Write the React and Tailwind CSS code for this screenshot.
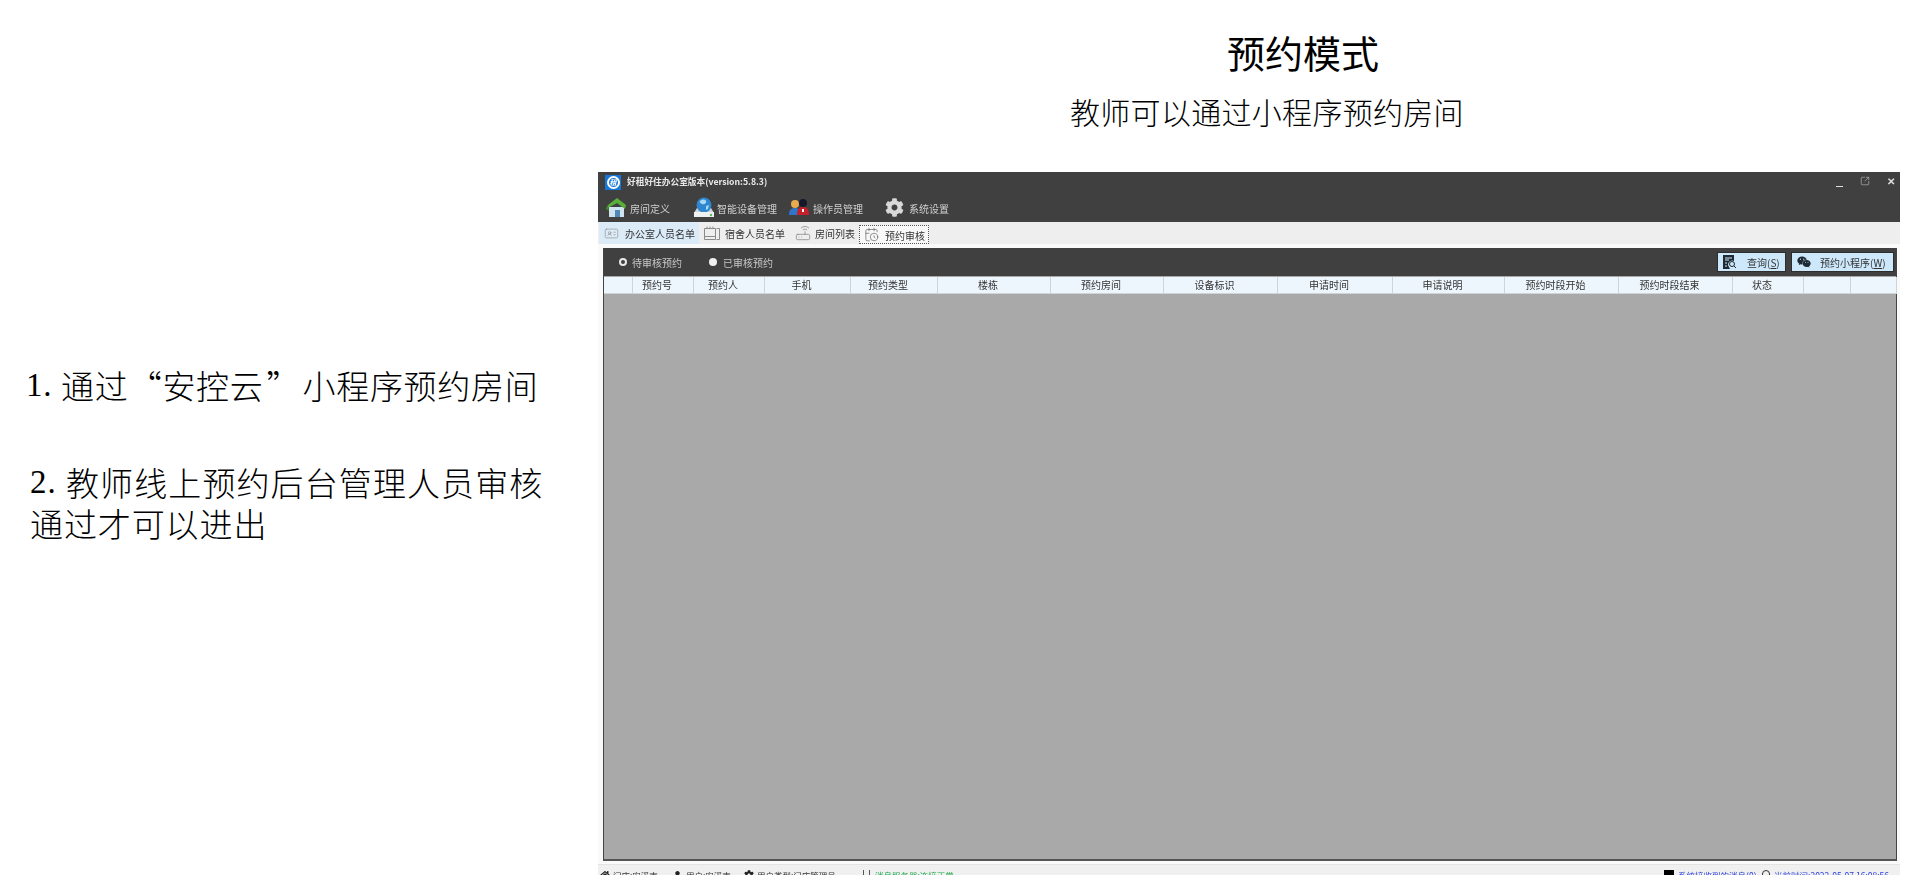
import { CalendarClock, IdCard, Router, SquareArrowOutUpRight } from 'lucide-react';
import { FaCog, FaHome, FaUser, FaWeixin } from 'react-icons/fa';

const COLUMNS = [
  '',
  '预约号',
  '预约人',
  '手机',
  '预约类型',
  '楼栋',
  '预约房间',
  '设备标识',
  '申请时间',
  '申请说明',
  '预约时段开始',
  '预约时段结束',
  '状态',
  '',
  '',
];

function AppLogo() {
  return (
    <div className="flex h-[15px] w-[16px] items-center justify-center bg-[#1677d8]">
      <div className="flex h-[13px] w-[13px] items-center justify-center rounded-full border-2 border-white text-[7px] font-bold italic leading-none text-white">
        租
      </div>
    </div>
  );
}

function HouseIcon() {
  return (
    <svg width="22" height="21" viewBox="0 0 22 21" aria-hidden>
      <path d="M4 10h15v10H4z" fill="#cfe3ef" />
      <path d="M10 13h5v7h-5z" fill="#4f87b5" />
      <path d="M1 12 3 8l9-7 9 7-1 4-8-6z" fill="#58b038" />
      <path d="M1 12 3 8l1 6z" fill="#3d8a2a" />
    </svg>
  );
}

function DriveIcon() {
  return (
    <svg width="20" height="21" viewBox="0 0 20 21" aria-hidden>
      <path d="M3 11 0 16v4h20v-4l-3-5z" fill="#cfd3d6" />
      <circle cx="10" cy="8" r="7.5" fill="#2d86cf" />
      <path d="M6 4c2-2 5-2 6 0s-2 4-4 3-3-2-2-3zM12 9l3-1-1 4-2 1z" fill="#a8d8f2" />
      <rect x="0" y="15" width="20" height="5" fill="#eef0f1" />
      <circle cx="17" cy="18" r="1.2" fill="#5cb85c" />
    </svg>
  );
}

function PeopleIcon() {
  return (
    <svg width="20" height="18" viewBox="0 0 20 18" aria-hidden>
      <circle cx="6" cy="6" r="4" fill="#e9a94e" />
      <path d="M0 17c0-5 2-7 6-7s6 2 6 7z" fill="#2f74c8" />
      <circle cx="14" cy="5" r="4" fill="#15182b" />
      <path d="M8 17c0-6 2-8 6-8s6 2 6 8z" fill="#c5202c" />
      <rect x="13" y="11" width="2" height="3" fill="#fff" />
    </svg>
  );
}

function BoardIcon() {
  return (
    <svg width="16" height="15" viewBox="0 0 16 15" fill="none" stroke="#8b8b8b" aria-hidden>
      <path d="M.5 2.5h11v11H.5zM12.5 2.5h3v11h-3M3 .5v2M6 .5v2M9 .5v2M.5 10.5h11" />
    </svg>
  );
}

function QueryIcon() {
  return (
    <svg width="13" height="14" viewBox="0 0 13 14" aria-hidden>
      <path d="M0 0h11v6a4 4 0 0 0-5 6l1 2H0z" fill="#1d2a33" />
      <path d="M2 3h7M2 5h4M2 8h2M2 11h2" stroke="#cfe8fb" />
      <circle cx="9" cy="9" r="2.5" fill="none" stroke="#1d2a33" />
      <path d="m11 11 2 2" stroke="#1d2a33" />
    </svg>
  );
}

function MenuItem({ icon, label, className }) {
  return (
    <div className={`flex items-center ${className}`}>
      {icon}
      <span className="pt-[2px] text-[10px] text-[#d0d0d0]">{label}</span>
    </div>
  );
}

function TabItem({ icon, label, className }) {
  return (
    <div className={`flex shrink-0 items-center whitespace-nowrap ${className}`}>
      {icon}
      <span className="pt-[1px] text-[10px] text-[#333]">{label}</span>
    </div>
  );
}

function ToolButton({ icon, children, className }) {
  return (
    <button
      type="button"
      className={`flex h-[20px] items-center border border-[#2d2d2d] bg-[#cde8fb] text-[10px] text-[#333] ${className}`}
    >
      {icon}
      {children}
    </button>
  );
}

export default function App() {
  return (
    <div className="flex h-[887px] overflow-hidden bg-white font-['Noto_Sans_CJK_SC',sans-serif] text-black">
      <aside className="w-[598px] shrink-0 pl-[26px] pt-[365px] text-[33px] font-light leading-[41px]">
        <p className="mb-[56px] flex whitespace-nowrap tracking-[0.7px]">
          <span className="w-[35px] font-['Liberation_Serif',serif]">1.</span>
          <span>通过</span>
          <span className="w-[34px] shrink-0 text-right">“</span>
          <span>安控云</span>
          <span className="w-[39px] shrink-0 pl-[3px]">”</span>
          <span>小程序预约房间</span>
        </p>
        <div className="pl-[4px]">
          <p className="flex whitespace-nowrap tracking-[1.1px]">
            <span className="w-[36px] font-['Liberation_Serif',serif]">2.</span>
            <span>教师线上预约后台管理人员审核</span>
          </p>
          <p className="whitespace-nowrap tracking-[0.9px]">通过才可以进出</p>
        </div>
      </aside>

      <main className="flex min-w-0 flex-1 flex-col pr-[20px] pt-[30px]">
        <h1 className="pl-[629px] text-[38px] font-normal leading-[44px]">预约模式</h1>
        <p className="mt-[17px] pl-[472px] text-[30px] font-light leading-[40px] tracking-[0.3px]">
          教师可以通过小程序预约房间
        </p>

        <section className="mt-[41px] flex h-[703px] flex-col overflow-hidden bg-[#fafafa] blur-[0.35px]">
          <header className="h-[50px] shrink-0 bg-[#404040]">
            <div className="flex h-[20px] items-center pl-[7px]">
              <AppLogo />
              <span className="ml-[6px] text-[8.7px] font-bold text-[#e8e8e8]">
                好租好住办公室版本(version:5.8.3)
              </span>
              <div className="ml-auto flex items-center gap-[17px] pr-[5px] text-[#e0e0e0]">
                <div className="mt-[8px] h-[1px] w-[7px] bg-[#e0e0e0]" />
                <SquareArrowOutUpRight className="mb-[3px] h-[10px] w-[10px] text-[#bbb]" strokeWidth={1.5} />
                <span className="mb-[3px] text-[10px] font-bold leading-none">✕</span>
              </div>
            </div>
            <div className="flex h-[30px] items-center pl-[7px]">
              <MenuItem icon={<HouseIcon />} label="房间定义" className="w-[89px] gap-[3px]" />
              <MenuItem icon={<DriveIcon />} label="智能设备管理" className="w-[95px] gap-[3px]" />
              <MenuItem icon={<PeopleIcon />} label="操作员管理" className="w-[96px] gap-[4px]" />
              <MenuItem
                icon={<FaCog className="h-[19px] w-[19px] text-[#d8d8d8]" />}
                label="系统设置"
                className="gap-[5px]"
              />
            </div>
          </header>

          <nav className="flex h-[22px] shrink-0 items-stretch bg-[#eeeeee] pl-[1px]">
            <TabItem
              icon={<IdCard className="h-[15px] w-[15px] text-[#8b8b8b]" strokeWidth={1} />}
              label="办公室人员名单"
              className="w-[100px] gap-[6px] bg-[#dcebf8] pl-[5px]"
            />
            <TabItem
              icon={<BoardIcon />}
              label="宿舍人员名单"
              className="ml-[1px] w-[89px] gap-[5px] pl-[4px]"
            />
            <TabItem
              icon={<Router className="h-[16px] w-[16px] text-[#777]" strokeWidth={1} />}
              label="房间列表"
              className="ml-[1px] w-[68px] gap-[4px] pl-[5px]"
            />
            <TabItem
              icon={<CalendarClock className="h-[15px] w-[15px] text-[#555]" strokeWidth={1} />}
              label="预约审核"
              className="ml-[1px] mt-[3px] w-[70px] gap-[6px] border border-dotted border-[#555] bg-[#f8f8f8] pl-[4px]"
            />
          </nav>

          <div className="ml-[5px] mr-[3px] mt-[4px] flex min-h-0 flex-1 flex-col border-x border-b-2 border-x-[#444] border-b-[#555] bg-[#a9a9a9]">
            <div className="flex h-[28px] shrink-0 items-center bg-[#404040] pl-[15px] pr-[2px]">
              <div className="h-[8px] w-[8px] rounded-full border-2 border-[#e8e8e8]" />
              <span className="ml-[5px] text-[10px] text-[#c8c8c8]">待审核预约</span>
              <div className="ml-[27px] h-[8px] w-[8px] rounded-full bg-[#f0f0f0]" />
              <span className="ml-[6px] text-[10px] text-[#c8c8c8]">已审核预约</span>
              <ToolButton
                icon={<QueryIcon />}
                className="ml-auto w-[69px] gap-[11px] pl-[5px]"
              >
                <span>
                  查询(<span className="underline">S</span>)
                </span>
              </ToolButton>
              <ToolButton
                icon={<FaWeixin className="h-[14px] w-[14px] text-[#1d2a33]" />}
                className="ml-[5px] w-[103px] gap-[9px] pl-[5px]"
              >
                <span>
                  预约小程序(<span className="underline">W</span>)
                </span>
              </ToolButton>
            </div>

            <div className="mt-[1px] grid h-[16px] shrink-0 grid-cols-[29px_61px_71px_86px_87px_113px_113px_114px_115px_112px_114px_114px_71px_47px_46px] bg-[#eef6fd]">
              {COLUMNS.map((col, i) => (
                <div
                  key={i}
                  className="border-b border-r border-[#cfd4d8] pr-[12px] text-center text-[10px] leading-[16px] text-[#333]"
                >
                  {col}
                </div>
              ))}
            </div>
          </div>

          <footer className="mt-[3px] flex h-[11px] shrink-0 items-start justify-between border-t border-[#e4e4e4] bg-[#f0f0f0] pl-[2px] pr-[11px] pt-[3px] text-[8.5px] leading-[14px]">
            <div className="flex items-center">
              <FaHome className="h-[10px] w-[10px] text-[#222]" />
              <span className="ml-[3px] w-[45px] text-[#333]">门店:安溪南</span>
              <FaUser className="ml-[15px] h-[9px] w-[9px] text-[#222]" />
              <span className="ml-[4px] w-[45px] text-[#333]">用户:安溪南</span>
              <FaCog className="ml-[13px] h-[10px] w-[10px] text-[#222]" />
              <span className="ml-[3px] w-[79px] text-[#333]">用户类型:门店管理员</span>
              <div className="ml-[27px] h-[10px] w-[7px] border-x border-[#555]" />
              <span className="ml-[5px] text-[#1ea84a]">消息服务器:连接正常</span>
            </div>
            <div className="flex items-center">
              <div className="h-[10px] w-[10px] bg-black" />
              <span className="ml-[4px] w-[78px] whitespace-nowrap text-[#2a3fe0]">系统接收到的消息(0)</span>
              <div className="ml-[6px] h-[10px] w-[8px] rounded-sm border border-[#333]" />
              <span className="ml-[4px] whitespace-nowrap text-[#2a3fe0]">当前时间:2022-05-07 16:08:56</span>
            </div>
          </footer>
        </section>
      </main>
    </div>
  );
}
